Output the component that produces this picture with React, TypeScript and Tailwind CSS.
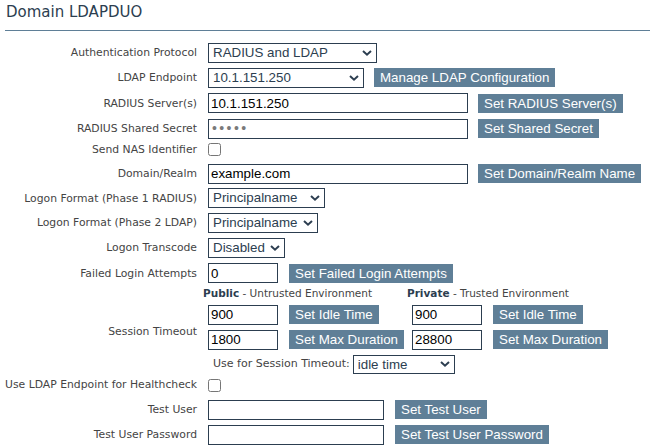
import React from "react";

const labelFont = { fontFamily: '"DejaVu Sans", Verdana, sans-serif' };
const ctrlFont = { fontFamily: '"Liberation Sans", Arial, sans-serif' };

function Chevron() {
  return (
    <svg width="10" height="7" viewBox="0 0 10 7" className="absolute right-[5px] top-1/2 -translate-y-1/2 pointer-events-none">
      <path d="M1 1.5 L5 5.2 L9 1.5" fill="none" stroke="#2c3e50" strokeWidth="2" />
    </svg>
  );
}

function Select({ value, w, h = "h-[20px]" }: { value: string; w: string; h?: string }) {
  return (
    <div className={`relative ${h} ${w}`}>
      <select
        defaultValue={value}
        className="block appearance-none w-full h-full border border-[#2c3e50] bg-white pl-[4px] py-0 text-[13.33px] leading-[18px] text-[#2c3e50] outline-none"
        style={ctrlFont}
      >
        <option>{value}</option>
      </select>
      <Chevron />
    </div>
  );
}

function TextInput({ value, w }: { value?: string; w: string }) {
  return (
    <input
      type="text"
      defaultValue={value}
      className={`block h-[20px] ${w} border border-[#2c3e50] bg-white px-[2px] text-[13.33px] text-black outline-none`}
      style={ctrlFont}
    />
  );
}

function PasswordInput({ value, w }: { value?: string; w: string }) {
  return (
    <input
      type="password"
      defaultValue={value}
      className={`block h-[20px] ${w} border border-[#2c3e50] bg-white pl-[3px] text-[14px] tracking-[2.4px] text-[#7a7a7a] outline-none`}
      style={ctrlFont}
    />
  );
}

function Btn({ children }: { children: React.ReactNode }) {
  return (
    <button
      className="block h-[19px] px-[6px] bg-[#5f7f97] text-white text-[13.33px] leading-[19px] whitespace-nowrap"
      style={ctrlFont}
    >
      {children}
    </button>
  );
}

function Row({ label, h, children, top = false }: { label: string; h: string; children?: React.ReactNode; top?: boolean }) {
  return (
    <div className={`flex ${top ? "items-start" : "items-center"} ${h}`}>
      <div className="w-[197px] text-right text-[10.8px] leading-[17px] text-[#444]" style={labelFont}>
        {label}
      </div>
      <div className={`ml-[11px] flex items-center gap-[10px] ${top ? "pt-[2px]" : ""}`}>{children}</div>
    </div>
  );
}

function Check() {
  return <input type="checkbox" className="block w-[13px] h-[13px] m-0" />;
}

export default function App() {
  return (
    <div className="w-[650px] h-[448px] bg-white overflow-hidden">
      <div className="h-[30px] pl-[6px] pt-[1px] text-[15px] leading-[22px] text-[#2c3e50]" style={labelFont}>
        Domain LDAPDUO
      </div>
      <div className="ml-[5px] border-t border-[#5f7f97]" />
      <div className="mt-[9px]">
        <Row label="Authentication Protocol" h="h-[25px]">
          <Select value="RADIUS and LDAP" w="w-[169px]" />
        </Row>
        <Row label="LDAP Endpoint" h="h-[25px]">
          <Select value="10.1.151.250" w="w-[156px]" />
          <Btn>Manage LDAP Configuration</Btn>
        </Row>
        <Row label="RADIUS Server(s)" h="h-[26px]">
          <TextInput value="10.1.151.250" w="w-[260px]" />
          <Btn>Set RADIUS Server(s)</Btn>
        </Row>
        <Row label="RADIUS Shared Secret" h="h-[25px]">
          <PasswordInput value="12345" w="w-[260px]" />
          <Btn>Set Shared Secret</Btn>
        </Row>
        <Row label="Send NAS Identifier" h="h-[20px]" top>
          <Check />
        </Row>
        <Row label="Domain/Realm" h="h-[25px]">
          <TextInput value="example.com" w="w-[260px]" />
          <Btn>Set Domain/Realm Name</Btn>
        </Row>
        <Row label="Logon Format (Phase 1 RADIUS)" h="h-[24px]">
          <Select value="Principalname" w="w-[117px]" />
        </Row>
        <Row label="Logon Format (Phase 2 LDAP)" h="h-[25px]">
          <Select value="Principalname" w="w-[110px]" />
        </Row>
        <Row label="Logon Transcode" h="h-[25px]">
          <Select value="Disabled" w="w-[77px]" />
        </Row>
        <Row label="Failed Login Attempts" h="h-[26px]">
          <div className="flex items-center gap-[11px]">
            <TextInput value="0" w="w-[70px]" />
            <Btn>Set Failed Login Attempts</Btn>
          </div>
        </Row>

        <div className="flex items-center h-[90px]">
          <div className="w-[197px] text-right text-[10.8px] leading-[17px] text-[#444]" style={labelFont}>
            Session Timeout
          </div>
          <div className="ml-[11px] flex flex-col">
            <div className="grid grid-cols-[204px_204px] h-[16px] items-center">
              <div className="-ml-[5px] text-[10.5px] text-[#444] whitespace-nowrap" style={labelFont}>
                <b className="font-bold text-[#2c3e50]">Public</b> - Untrusted Environment
              </div>
              <div className="-ml-[5px] text-[10.5px] text-[#444] whitespace-nowrap" style={labelFont}>
                <b className="font-bold text-[#2c3e50]">Private</b> - Trusted Environment
              </div>
            </div>
            <div className="grid grid-cols-[204px_204px] h-[25px] items-center">
              <div className="flex items-center gap-[11px]">
                <TextInput value="900" w="w-[70px]" />
                <Btn>Set Idle Time</Btn>
              </div>
              <div className="flex items-center gap-[11px]">
                <TextInput value="900" w="w-[70px]" />
                <Btn>Set Idle Time</Btn>
              </div>
            </div>
            <div className="grid grid-cols-[204px_204px] h-[25px] items-center">
              <div className="flex items-center gap-[11px]">
                <TextInput value="1800" w="w-[70px]" />
                <Btn>Set Max Duration</Btn>
              </div>
              <div className="flex items-center gap-[11px]">
                <TextInput value="28800" w="w-[70px]" />
                <Btn>Set Max Duration</Btn>
              </div>
            </div>
            <div className="flex items-center h-[24px] pl-[5px] gap-[3px]">
              <span className="text-[11px] text-[#444]" style={labelFont}>
                Use for Session Timeout:
              </span>
              <Select value="idle time" w="w-[102px]" h="h-[19px]" />
            </div>
          </div>
        </div>

        <Row label="Use LDAP Endpoint for Healthcheck" h="h-[21px]" top>
          <div className="pt-[1px]">
            <Check />
          </div>
        </Row>
        <Row label="Test User" h="h-[25px]">
          <div className="flex items-center gap-[11px]">
            <TextInput w="w-[176px]" />
            <Btn>Set Test User</Btn>
          </div>
        </Row>
        <Row label="Test User Password" h="h-[25px]">
          <div className="flex items-center gap-[11px]">
            <PasswordInput w="w-[176px]" />
            <Btn>Set Test User Password</Btn>
          </div>
        </Row>
      </div>
    </div>
  );
}
